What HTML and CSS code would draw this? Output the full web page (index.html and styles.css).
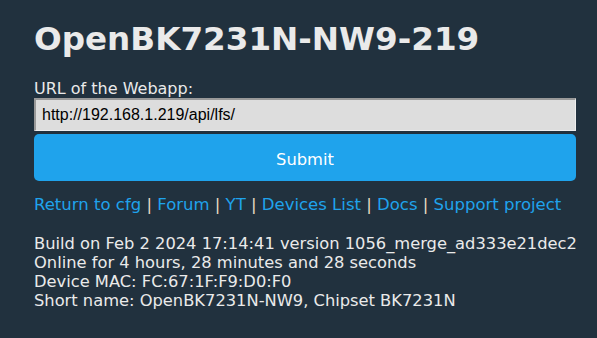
FILE: index.html
```html
<!DOCTYPE html>
<html lang="en">

<head>
  <meta charset="UTF-8" />
  <title>OpenBK7231N-NW9-219</title>
  <link rel="stylesheet" href="styles.css">
</head>

<body>
  <div class="main">
    <h1>OpenBK7231N-NW9-219</h1>
    <form class="webapp-form">
      <label for="url">URL of the Webapp:</label>
      <input id="url" type="text" value="http://192.168.1.219/api/lfs/">
      <button type="submit">Submit</button>
    </form>
    <div class="links">
      <a href="#">Return to cfg</a> | <a href="#">Forum</a> | <a href="#">YT</a> | <a href="#">Devices List</a> | <a href="#">Docs</a> | <a href="#">Support project</a>
    </div>
    <div class="info">
      Build on Feb 2 2024 17:14:41 version 1056_merge_ad333e21dec2<br>
      Online for 4 hours, 28 minutes and 28 seconds<br>
      Device MAC: FC:67:1F:F9:D0:F0<br>
      Short name: OpenBK7231N-NW9, Chipset BK7231N
    </div>
  </div>
</body>

</html>
```

FILE: styles.css
```css
body {
  margin: 0;
  background-color: #21313e;
  color: #eaeaea;
  font-family: "DejaVu Sans", Verdana, sans-serif;
  font-size: 16px;
}

.main {
  padding: 18px 20px 0 34px;
}

h1 {
  margin: 0 0 19px;
  font-size: 32.6px;
  font-weight: bold;
  line-height: 42px;
}

.webapp-form {
  display: flex;
  flex-direction: column;
}

label {
  line-height: 19px;
}

input {
  box-sizing: border-box;
  width: 542px;
  height: 33px;
  padding: 0 6px;
  border-style: solid;
  border-width: 2px 1px 1px 2px;
  border-color: #999 #eee #eee #999;
  background-color: #dddddd;
  color: #000;
  font-family: "Liberation Sans", Arial, sans-serif;
  font-size: 16px;
}

button {
  width: 542px;
  height: 47px;
  margin-top: 3px;
  padding: 3px 0 0;
  border: none;
  border-radius: 5px;
  background-color: #1fa3ec;
  color: #fff;
  font-family: "DejaVu Sans", Verdana, sans-serif;
  font-size: 16.3px;
  cursor: pointer;
}

.links {
  margin-top: 14px;
  line-height: 19px;
  font-size: 16.5px;
  color: #e8dcc4;
}

.links a {
  color: #1fa3ec;
  text-decoration: none;
}

.info {
  margin-top: 20px;
  line-height: 19px;
  font-size: 16.3px;
}
```
